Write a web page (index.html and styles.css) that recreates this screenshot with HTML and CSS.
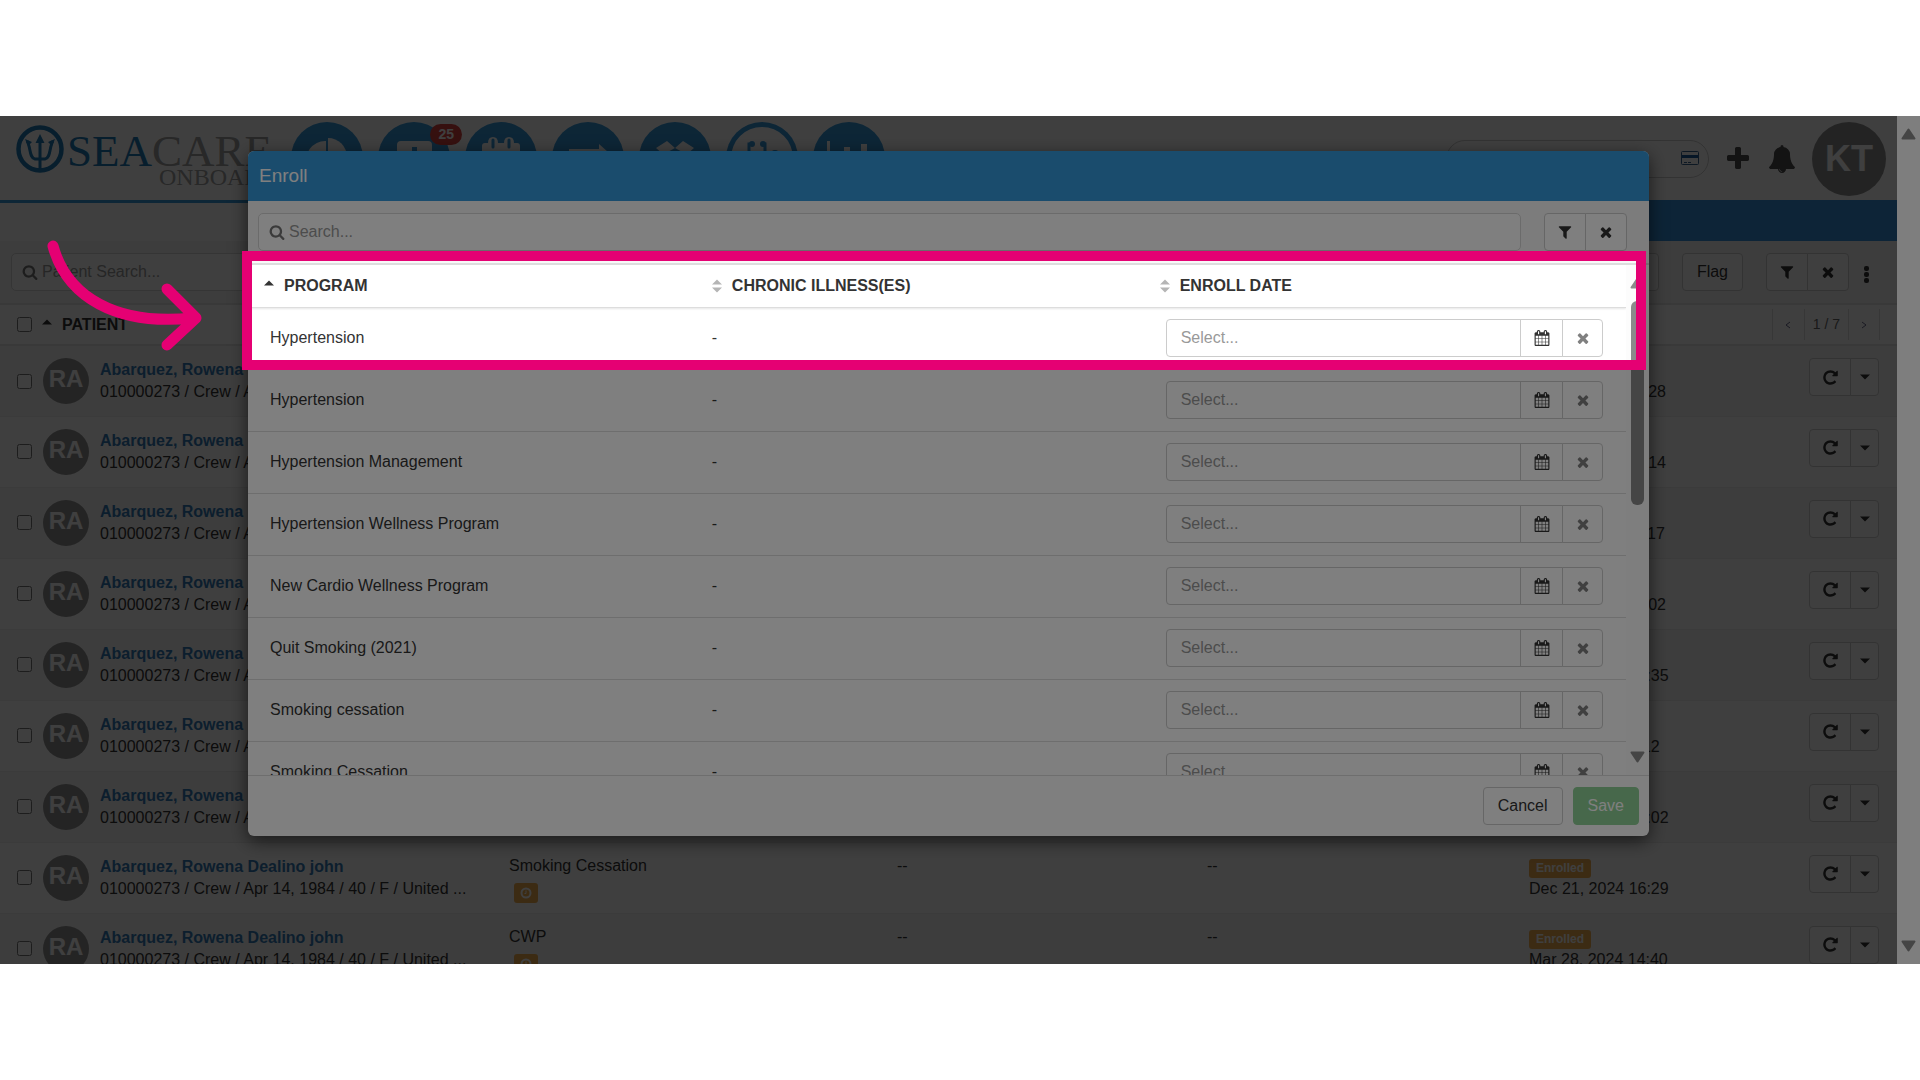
FILE: index.html
```html
<!DOCTYPE html>
<html lang="en">

<head>
    <meta charset="UTF-8">
    <meta name="viewport" content="width=device-width, initial-scale=1.0">
    <title>SeaCare Onboard - Enroll</title>
    <link rel="stylesheet" href="styles.css">
</head>

<body>
    <!-- icon set -->
    <svg class="sprite" aria-hidden="true">
        <symbol id="i-times" viewBox="0 0 1792 1792"><path d="M1490 1322q0 40-28 68l-136 136q-28 28-68 28t-68-28l-294-294-294 294q-28 28-68 28t-68-28l-136-136q-28-28-28-68t28-68l294-294-294-294q-28-28-28-68t28-68l136-136q28-28 68-28t68 28l294 294 294-294q28-28 68-28t68 28l136 136q28 28 28 68t-28 68l-294 294 294 294q28 28 28 68z"/></symbol>
        <symbol id="i-filter" viewBox="0 0 1792 1792"><path d="M1595 295q17 41-14 70l-493 493v742q0 42-39 59-13 5-25 5-27 0-45-19l-256-256q-19-19-19-45v-486l-493-493q-31-29-14-70 17-39 59-39h1280q42 0 59 39z"/></symbol>
        <symbol id="i-search" viewBox="0 0 1792 1792"><path d="M1216 832q0-185-131.500-316.500t-316.500-131.500-316.500 131.500-131.500 316.500 131.500 316.500 316.500 131.500 316.500-131.500 131.500-316.500zm512 832q0 52-38 90t-90 38q-54 0-90-38l-343-342q-179 124-399 124-143 0-273.500-55.500t-225-150-150-225-55.500-273.500 55.500-273.500 150-225 225-150 273.500-55.500 273.500 55.500 225 150 150 225 55.500 273.500q0 220-124 399l343 343q37 37 37 90z"/></symbol>
        <symbol id="i-repeat" viewBox="0 0 1792 1792"><path d="M1664 256v448q0 26-19 45t-45 19h-448q-42 0-59-40-17-39 14-69l138-138q-148-137-349-137-104 0-198.500 40.500t-163.500 109.500-109.500 163.500-40.500 198.500 40.500 198.500 109.500 163.500 163.500 109.500 198.500 40.500q119 0 225-52t179-147q7-10 23-12 15 0 25 9l137 138q9 8 9.500 20.500t-7.500 22.500q-109 132-264 204.500t-327 72.500q-156 0-298-61t-245-164-164-245-61-298 61-298 164-245 245-164 298-61q147 0 284.500 55.500t244.500 156.500l130-129q29-31 70-14 39 17 39 59z"/></symbol>
        <symbol id="i-calendar" viewBox="0 0 1792 1792"><path d="M192 1664h288v-288h-288v288zm352 0h320v-288h-320v288zm-352-352h288v-320h-288v320zm352 0h320v-320h-320v320zm-352-384h288v-288h-288v288zm736 736h320v-288h-320v288zm-384-736h320v-288h-320v288zm768 736h288v-288h-288v288zm-384-352h320v-320h-320v320zm-352-864v-288q0-13-9.500-22.500t-22.500-9.500h-64q-13 0-22.500 9.500t-9.500 22.500v288q0 13 9.500 22.500t22.500 9.500h64q13 0 22.500-9.500t9.500-22.500zm736 864h288v-320h-288v320zm-384-384h320v-288h-320v288zm384 0h288v-288h-288v288zm32-480v-288q0-13-9.500-22.500t-22.500-9.500h-64q-13 0-22.500 9.500t-9.500 22.500v288q0 13 9.500 22.500t22.500 9.500h64q13 0 22.500-9.500t9.500-22.500zm384-64v1280q0 52-38 90t-90 38h-1408q-52 0-90-38t-38-90v-1280q0-52 38-90t90-38h128v-96q0-66 47-113t113-47h64q66 0 113 47t47 113v96h384v-96q0-66 47-113t113-47h64q66 0 113 47t47 113v96h128q52 0 90 38t38 90z"/></symbol>
        <symbol id="i-plus" viewBox="0 0 1792 1792"><path d="M1600 736v192q0 40-28 68t-68 28h-416v416q0 40-28 68t-68 28h-192q-40 0-68-28t-28-68v-416h-416q-40 0-68-28t-28-68v-192q0-40 28-68t68-28h416v-416q0-40 28-68t68-28h192q40 0 68 28t28 68v416h416q40 0 68 28t28 68z"/></symbol>
        <symbol id="i-bell" viewBox="0 0 1792 1792"><path d="M912 1696q0-16-16-16-59 0-101.500-42.500t-42.500-101.500q0-16-16-16t-16 16q0 73 51.500 124.500t124.500 51.500q16 0 16-16zm816-288q0 52-38 90t-90 38h-448q0 106-75 181t-181 75-181-75-75-181h-448q-52 0-90-38t-38-90q50-42 91-88t85-119.500 74.500-158.500 50-206 19.500-260q0-152 117-282.500t307-158.500q-8-19-8-39 0-40 28-68t68-28 68 28 28 68q0 20-8 39 190 28 307 158.500t117 282.500q0 139 19.500 260t50 206 74.500 158.500 85 119.500 91 88z"/></symbol>
        <symbol id="i-clock" viewBox="0 0 12 12"><circle cx="6" cy="6" r="4.500" fill="none" stroke="currentColor" stroke-width="2"/><path d="M6 3.500V6.500H4.500" fill="none" stroke="currentColor"/></symbol>
        <symbol id="i-down" viewBox="0 0 10 6"><path d="M0 .5h10L5 5.500z"/></symbol>
        <symbol id="i-up" viewBox="0 0 10 14"><path d="M0 6.500h10L5 1.500z"/></symbol>
        <symbol id="i-sort" viewBox="0 0 10 14"><path d="M0 5.500h10L5 .5zM0 8.500h10L5 13.500z"/></symbol>
        <symbol id="i-scroll-up" viewBox="0 0 15 12"><path d="M7.500 1.500 13.500 10.500h-12z" stroke="currentColor" stroke-width="2" stroke-linejoin="round"/></symbol>
        <symbol id="i-scroll-down" viewBox="0 0 15 12"><path d="M7.500 10.500 13.500 1.500h-12z" stroke="currentColor" stroke-width="2" stroke-linejoin="round"/></symbol>
    </svg>

    <div class="window">
        <div class="app">
            <header class="header">
                <div class="logo">
                    <svg class="logo-mark" viewBox="0 0 48 48">
                        <circle cx="24" cy="24" r="21.500" fill="none" stroke="#1c78b4" stroke-width="4.500"/>
                        <path d="M24 13v32M11 16c4 6 2 17 8 18h10c6-1 4-12 8-18" fill="none" stroke="#1c78b4" stroke-width="3"/>
                        <path d="M24 9l4.500 9h-9zM9 14l7 3-4 4zM39 14l-7 3 4 4z" fill="#1c78b4"/>
                    </svg>
                    <div class="logo-text">
                        <span class="logo-name"><b>SEA</b>CARE</span>
                        <span class="logo-sub">ONBOARD</span>
                    </div>
                </div>
                <nav class="main-nav">
                    <a href="#" aria-label="Dashboard"><svg viewBox="0 0 72 72"><path d="M35 19v19l13 13A19 19 0 1 1 35 19z"/><path d="M37 16a19 19 0 0 1 19 19H37z"/></svg></a>
                    <a href="#" aria-label="Messages"><svg viewBox="0 0 72 72"><path fill-rule="evenodd" d="M23 19h27q4 0 4 4v24q0 4-4 4H23q-4 0-4-4V23q0-4 4-4zm11 6v7h-7v5h7v7h5v-7h7v-5h-7v-7z"/></svg><span class="count">25</span></a>
                    <a href="#" aria-label="Calendar"><svg viewBox="0 0 72 72"><path d="M17 24q0-3 3-3h3q0-6 5-6t5 6h6q0-6 5-6t5 6h3q3 0 3 3v31H17z"/><path d="M28 18v7M44 18v7" stroke="#3498db" stroke-width="3" stroke-linecap="round"/></svg></a>
                    <a href="#" aria-label="Transfers"><svg viewBox="0 0 72 72"><path d="M17 27h30v-5l9 8-9 8v-5H17zM56 45H26v-5l-9 8 9 8v-5h30z"/></svg></a>
                    <a href="#" aria-label="Packages"><svg viewBox="0 0 72 72"><path d="M28 19l8 7 8-7 11 7-7 6 7 6-11 7-8-7-8 7-11-7 7-6-7-6z"/><path d="M36 26l11 6-11 6-11-6z" fill="#3498db"/></svg></a>
                    <a class="active" href="#" aria-label="Programs"><svg viewBox="0 0 72 72"><path d="M26 22h-3v10q0 9 8 9t8-9V22h-3" fill="none" stroke="#3498db" stroke-width="3"/><circle cx="26" cy="22" r="3"/><circle cx="37" cy="22" r="3"/><path d="M31 41v6q0 7 8 7t9-7V33" fill="none" stroke="#3498db" stroke-width="3"/><circle cx="49" cy="32" r="4"/></svg></a>
                    <a href="#" aria-label="Reports"><svg viewBox="0 0 72 72"><path d="M14 19h3v33h40v3H14zM22 36h6v13h-6zM31 25h6v24h-6zM40 32h6v17h-6zM48 22h6v27h-6z"/></svg></a>
                </nav>
                <div class="header-right">
                    <div class="quick-search">
                        <input type="text" aria-label="Quick search">
                        <svg viewBox="0 0 18 14"><rect x=".5" y=".5" width="17" height="13" rx="1" fill="none" stroke="#34608f"/><path d="M1 4h16v3H1z" fill="#1c5c9c"/><path d="M3 11.500h3M7 11.500h3" stroke="#34608f"/></svg>
                    </div>
                    <button class="icon-btn" aria-label="Add"><svg><use href="#i-plus"/></svg></button>
                    <button class="icon-btn" aria-label="Notifications"><svg><use href="#i-bell"/></svg></button>
                    <div class="user">KT</div>
                </div>
            </header>
            <div class="sub-nav">
                <div class="sub-title"></div>
                <div class="sub-bar"></div>
            </div>

            <div class="toolbar">
                <div class="search">
                    <svg><use href="#i-search"/></svg>
                    <input type="text" placeholder="Patient Search..." aria-label="Patient Search">
                </div>
                <button class="btn">Enroll</button>
                <button class="btn">Flag</button>
                <div class="btn-group">
                    <button class="btn" aria-label="Filter"><svg><use href="#i-filter"/></svg></button>
                    <button class="btn" aria-label="Clear"><svg><use href="#i-times"/></svg></button>
                </div>
                <button class="dots" aria-label="More"><i></i><i></i><i></i></button>
            </div>

            <table class="patients">
                <colgroup>
                    <col class="c-patient">
                    <col class="c-program">
                    <col class="c-flag">
                    <col class="c-note">
                    <col class="c-status">
                    <col>
                </colgroup>
                <thead>
                    <tr>
                        <th>
                            <div class="th-patient">
                                <input type="checkbox" aria-label="Select all">
                                <svg class="sort"><use href="#i-up"/></svg>
                                <span>PATIENT</span>
                            </div>
                        </th>
                        <th></th>
                        <th></th>
                        <th></th>
                        <th colspan="2">
                            <div class="pager">
                                <button aria-label="Previous"><svg viewBox="0 0 6 8"><path d="M5 1L1 4l4 3"/></svg></button>
                                <span>1 / 7</span>
                                <button aria-label="Next"><svg viewBox="0 0 6 8"><path d="M1 1l4 3-4 3"/></svg></button>
                            </div>
                        </th>
                    </tr>
                </thead>
                <tbody id="patient_rows"></tbody>
            </table>

            <!-- enroll dialog -->
            <div class="backdrop">
                <div class="modal" role="dialog" aria-labelledby="modal_title">
                    <div class="modal-header" id="modal_title">Enroll</div>
                    <div class="modal-search">
                        <div class="search">
                            <svg><use href="#i-search"/></svg>
                            <input type="text" placeholder="Search..." aria-label="Search programs">
                        </div>
                        <div class="btn-group">
                            <button class="btn" aria-label="Filter"><svg><use href="#i-filter"/></svg></button>
                            <button class="btn" aria-label="Clear"><svg><use href="#i-times"/></svg></button>
                        </div>
                    </div>
                    <div class="modal-body">
                        <div class="table-wrap">
                            <table class="programs">
                                <colgroup>
                                    <col class="c-name">
                                    <col class="c-name">
                                    <col>
                                </colgroup>
                                <thead>
                                    <tr>
                                        <th><div class="th-sort"><svg class="sort"><use href="#i-up"/></svg>PROGRAM</div></th>
                                        <th><div class="th-sort"><svg class="sort off"><use href="#i-sort"/></svg>CHRONIC ILLNESS(ES)</div></th>
                                        <th><div class="th-sort"><svg class="sort off"><use href="#i-sort"/></svg>ENROLL DATE</div></th>
                                    </tr>
                                </thead>
                                <tbody id="program_rows"></tbody>
                            </table>
                        </div>
                        <div class="scroll">
                            <svg><use href="#i-scroll-up"/></svg>
                            <div class="track"><div class="thumb"></div></div>
                            <svg><use href="#i-scroll-down"/></svg>
                        </div>
                    </div>
                    <div class="modal-footer">
                        <button class="btn">Cancel</button>
                        <button class="btn save">Save</button>
                    </div>
                </div>
            </div>
        </div>

        <div class="scroll">
            <svg><use href="#i-scroll-up"/></svg>
            <div class="track"></div>
            <svg><use href="#i-scroll-down"/></svg>
        </div>

        <!-- guide step -->
        <div class="spotlight"></div>
        <svg class="arrow" viewBox="0 0 170 120">
            <path d="M13 11C27 62 76 91 153 83M127 54l29 29-29 27"/>
        </svg>
    </div>

    <script src="script.js"></script>
</body>

</html>
```

FILE: styles.css
```css
* {
    box-sizing: border-box;
}

body {
    margin: 0;
    padding: 116px 0;
    height: 100vh;
    display: flex;
    flex-direction: column;
    background-color: #fff;
    font-family: "Liberation Sans", Arial, sans-serif;
    font-size: 16px;
    line-height: 22px;
    color: #333;
}

button,
input {
    font-family: inherit;
    font-size: 16px;
    color: inherit;
}

button {
    padding: 0;
    border: 0;
    background: none;
}

svg {
    display: block;
    fill: currentColor;
}

table {
    width: 100%;
    border-collapse: collapse;
    table-layout: fixed;
}

th,
td {
    padding: 0;
    text-align: left;
    vertical-align: top;
}

.sprite {
    position: absolute;
    width: 0;
    height: 0;
}

.window {
    position: relative;
    flex: 1;
    min-height: 0;
    display: flex;
    overflow: hidden;
}

.app {
    position: relative;
    flex: 1;
    overflow: hidden;
}

/* header */
.header {
    display: flex;
    align-items: flex-start;
    height: 84px;
    padding: 6px 11px 0 16px;
}

.logo {
    display: flex;
    width: 275px;
    padding-top: 3px;
}

.logo-mark {
    width: 48px;
    height: 48px;
    flex: none;
}

.logo-text {
    display: flex;
    flex-direction: column;
    padding: 5px 0 0 3px;
    font-family: "Liberation Serif", "Times New Roman", serif;
    color: #a0a0a0;
}

.logo-name {
    font-size: 45px;
    line-height: 42px;
}

.logo-name b {
    font-weight: normal;
    color: #1c78b4;
}

.logo-sub {
    padding-left: 92px;
    font-size: 24px;
    line-height: 10px;
}

.main-nav {
    display: flex;
    gap: 15px;
}

.main-nav a {
    position: relative;
    width: 72px;
    height: 72px;
    border-radius: 50%;
    background-color: #3498db;
    color: #fff;
}

.main-nav a.active {
    background-color: #fff;
    color: #3498db;
    box-shadow: inset 0 0 0 5px #3498db;
}

.main-nav .count {
    position: absolute;
    top: 2px;
    right: -12px;
    padding: 0 8px;
    border-radius: 11px;
    background-color: #d9433f;
    color: #fff;
    font-size: 14px;
    font-weight: bold;
    line-height: 21px;
}

.header-right {
    display: flex;
    align-items: center;
    margin-left: auto;
}

.quick-search {
    position: relative;
    margin-right: 15px;
}

.quick-search input {
    display: block;
    width: 263px;
    height: 38px;
    padding: 0 40px 0 16px;
    border: 1px solid #ccc;
    border-radius: 19px;
    background-color: #fff;
}

.quick-search svg {
    position: absolute;
    top: 11px;
    right: 10px;
    width: 18px;
    height: 14px;
}

.icon-btn {
    margin-right: 16px;
}

.icon-btn svg {
    width: 28px;
    height: 28px;
    color: #4c4c4c;
}

.user {
    width: 74px;
    height: 74px;
    border-radius: 50%;
    background-color: #8f8f8f;
    color: #fff;
    font-size: 36px;
    font-weight: bold;
    line-height: 74px;
    text-align: center;
}

.sub-nav {
    display: flex;
    height: 41px;
}

.sub-title {
    width: 400px;
    border-top: 3px solid #3498db;
}

.sub-bar {
    flex: 1;
    background-color: #3490dc;
}

/* form controls */
.search {
    position: relative;
}

.search svg {
    position: absolute;
    top: 11px;
    left: 11px;
    width: 16px;
    height: 16px;
    color: #777;
}

.search input {
    display: block;
    width: 100%;
    height: 38px;
    padding: 0 12px 0 30px;
    border: 1px solid #d6d6d6;
    border-radius: 5px;
    background-color: #fff;
}

input::placeholder {
    color: #999;
    opacity: 1;
}

.btn {
    display: flex;
    align-items: center;
    justify-content: center;
    height: 38px;
    padding: 0 14px;
    border: 1px solid #ccc;
    border-radius: 4px;
    background-color: #fff;
    color: #333;
}

.btn-group {
    display: flex;
}

.btn-group .btn {
    width: 42px;
    padding: 0;
}

.btn-group .btn:first-child {
    border-radius: 4px 0 0 4px;
}

.btn-group .btn:last-child {
    margin-left: -1px;
    border-radius: 0 4px 4px 0;
}

.btn svg {
    width: 16px;
    height: 16px;
}

.toolbar {
    display: flex;
    align-items: center;
    height: 62px;
    padding: 0 28px 0 11px;
    background-color: #f5f5f5;
}

.toolbar .search {
    width: 420px;
    margin-right: auto;
}

.toolbar .btn {
    margin-right: 23px;
}

.toolbar .btn-group {
    margin-right: 10px;
}

.toolbar .btn-group .btn {
    margin-right: 0;
}

.dots {
    display: flex;
    flex-direction: column;
    gap: 1px;
    padding: 4px 0 0 5px;
}

.dots i {
    width: 5px;
    height: 5px;
    border-radius: 2px;
    background-color: #333;
}

/* patients list */
.patients {
    color: #333;
}

.c-patient {
    width: 497px;
}

.c-program {
    width: 388px;
}

.c-flag {
    width: 310px;
}

.c-note {
    width: 322px;
}

.c-status {
    width: 280px;
}

.patients thead th {
    height: 41px;
    border-top: 2px solid #e4e4e4;
    border-bottom: 2px solid #e4e4e4;
    vertical-align: middle;
}

.patients tbody tr {
    height: 71px;
    border-bottom: 1px solid #ececec;
}

.patients tbody tr:nth-child(odd) {
    background-color: #f6f6f6;
}

.patients td {
    padding: 12px 12px 0;
}

.patients td:first-child {
    padding-left: 17px;
}

.patients input {
    width: 15px;
    height: 15px;
    margin: 0;
}

.th-patient {
    display: flex;
    align-items: center;
    gap: 10px;
    padding-left: 17px;
}

.sort {
    width: 10px;
    height: 14px;
}

.sort.off {
    color: #b5b5b5;
}

.pager {
    display: flex;
    justify-content: flex-end;
    padding-right: 17px;
    color: #666;
    font-size: 14px;
    font-weight: normal;
    line-height: 31px;
}

.pager button,
.pager span {
    padding: 0 8px;
    border-left: 1px solid #ddd;
}

.pager button {
    width: 32px;
    padding: 0 12px;
}

.pager button:last-child {
    border-right: 1px solid #ddd;
}

.pager svg {
    width: 6px;
    height: 8px;
    fill: none;
    stroke: #668;
    stroke-width: 1;
}

.patient {
    display: flex;
    align-items: center;
    height: 46px;
}

.avatar {
    width: 46px;
    height: 46px;
    margin: 0 11px;
    border-radius: 50%;
    background-color: #929292;
    color: #fff;
    font-size: 24px;
    font-weight: bold;
    line-height: 42px;
    text-align: center;
}

.patient a {
    display: block;
    color: #337ab7;
    font-weight: bold;
    text-decoration: none;
}

.patient p {
    margin: 0;
    white-space: nowrap;
}

.clock {
    display: flex;
    align-items: center;
    justify-content: center;
    width: 24px;
    height: 20px;
    margin: 6px 0 0 5px;
    border-radius: 3px;
    background-color: #f0ad4e;
    color: #fff;
}

.clock svg {
    width: 12px;
    height: 12px;
}

.label {
    display: block;
    width: max-content;
    margin: 4px 0 0;
    padding: 0 7px;
    border-radius: 3px;
    background-color: #f0ad4e;
    color: #fff;
    font-size: 12px;
    font-weight: bold;
    line-height: 19px;
}

.patients .btn-group .btn:last-child {
    width: 29px;
}

.patients .btn-group .btn:last-child svg {
    width: 10px;
    height: 6px;
}

.patients .btn-group .btn:first-child svg {
    width: 17px;
    height: 17px;
}

/* dialog */
.backdrop {
    position: absolute;
    inset: 0;
    padding: 35px 248px 128px;
    background-color: rgba(0, 0, 0, 0.5);
}

.modal {
    display: flex;
    flex-direction: column;
    height: 100%;
    border-radius: 6px;
    background-color: #fff;
    box-shadow: 0 5px 18px rgba(0, 0, 0, 0.6);
    overflow: hidden;
}

.modal-header {
    height: 50px;
    padding: 0 11px;
    background-color: #3498db;
    color: #fff;
    font-size: 19px;
    line-height: 49px;
}

.modal-search {
    display: flex;
    gap: 23px;
    padding: 12px 22px 12px 10px;
    border-bottom: 2px solid #ddd;
    background-color: #f8f8f8;
}

.modal-search .search {
    flex: 1;
}

.modal-body {
    display: flex;
    flex: 1;
    min-height: 0;
    border-bottom: 1px solid #ddd;
}

.table-wrap {
    flex: 1;
    overflow: hidden;
}

.c-name {
    width: 32.5%;
}

.programs thead {
    box-shadow: 0 2px 2px rgba(0, 0, 0, 0.1);
}

.programs th {
    height: 42px;
    border-bottom: 1px solid #ddd;
    vertical-align: middle;
}

.th-sort {
    display: flex;
    align-items: center;
    gap: 10px;
    padding-left: 16px;
}

.programs td {
    height: 62px;
    padding: 0 23px 0 16px;
    border-bottom: 1px solid #ddd;
    vertical-align: middle;
}

.programs td:first-child,
.programs td:last-child {
    padding-left: 22px;
}

.date {
    display: flex;
}

.date input {
    flex: 1;
    min-width: 0;
    height: 38px;
    padding: 0 14px;
    border: 1px solid #ccc;
    border-radius: 4px 0 0 4px;
}

.date .btn {
    width: 43px;
    margin-left: -1px;
    padding: 0;
    border-radius: 0;
}

.date .btn:last-child {
    width: 41px;
    border-radius: 0 4px 4px 0;
    color: #808080;
}

.modal-footer {
    display: flex;
    justify-content: flex-end;
    gap: 10px;
    padding: 11px 10px;
}

.modal-footer .save {
    border-color: #8fd096;
    background-color: #8fd096;
    color: #fff;
}

/* scrollbars */
.scroll {
    display: flex;
    flex-direction: column;
    align-items: center;
    width: 23px;
    padding: 12px 0;
    background-color: #fcfcfc;
    color: #8b8b8b;
}

.scroll svg {
    width: 15px;
    height: 12px;
}

.track {
    flex: 1;
    padding: 12px 0;
}

.thumb {
    width: 13px;
    height: 204px;
    border-radius: 6px;
    background-color: #8b8b8b;
}

/* guide */
.spotlight {
    position: absolute;
    top: 135px;
    right: 274px;
    left: 242px;
    height: 119px;
    border: 10px solid #e50073;
    box-shadow: 0 0 0 2000px rgba(0, 0, 0, 0.5);
}

.arrow {
    position: absolute;
    top: 119px;
    left: 40px;
    width: 170px;
    height: 120px;
    fill: none;
    stroke: #e50073;
    stroke-width: 11;
    stroke-linecap: round;
    stroke-linejoin: round;
}
```

FILE: script.js
```js
var patients = [
    ['Hypertension', 'Jan 14, 2025 10:28'],
    ['Hypertension', 'Jan 10, 2025 09:14'],
    ['Smoking Cessation', 'Jan 08, 2025 11:17'],
    ['CWP', 'Jan 06, 2025 15:02'],
    ['CWP', 'Dec 30, 2024 13:35'],
    ['Smoking Cessation', 'Dec 27, 2024 8:12'],
    ['Hypertension', 'Dec 23, 2024 14:02'],
    ['Smoking Cessation', 'Dec 21, 2024 16:29'],
    ['CWP', 'Mar 28, 2024 14:40']
];

var programs = [
    'Hypertension',
    'Hypertension',
    'Hypertension Management',
    'Hypertension Wellness Program',
    'New Cardio Wellness Program',
    'Quit Smoking (2021)',
    'Smoking cessation',
    'Smoking Cessation'
];

function icon(name) {
    return '<svg><use href="#i-' + name + '"/></svg>';
}

document.getElementById('patient_rows').innerHTML = patients.map(function (item) {
    return '<tr>' +
        '<td><div class="patient">' +
        '<input type="checkbox" aria-label="Select patient">' +
        '<div class="avatar">RA</div>' +
        '<div><a href="#">Abarquez, Rowena Dealino john</a>' +
        '<p>010000273 / Crew / Apr 14, 1984 / 40 / F / United ...</p></div>' +
        '</div></td>' +
        '<td>' + item[0] + '<div class="clock">' + icon('clock') + '</div></td>' +
        '<td>--</td>' +
        '<td>--</td>' +
        '<td><span class="label">Enrolled</span>' + item[1] + '</td>' +
        '<td><div class="btn-group">' +
        '<button class="btn" aria-label="Refresh">' + icon('repeat') + '</button>' +
        '<button class="btn" aria-label="Actions">' + icon('down') + '</button>' +
        '</div></td>' +
        '</tr>';
}).join('');

document.getElementById('program_rows').innerHTML = programs.map(function (name, i) {
    return '<tr>' +
        '<td>' + name + '</td>' +
        '<td>-</td>' +
        '<td><div class="date">' +
        '<input type="text" id="date_' + i + '" placeholder="Select..." aria-label="Enroll date">' +
        '<button class="btn" aria-label="Open calendar">' + icon('calendar') + '</button>' +
        '<button class="btn" aria-label="Clear date">' + icon('times') + '</button>' +
        '</div></td>' +
        '</tr>';
}).join('');
```
